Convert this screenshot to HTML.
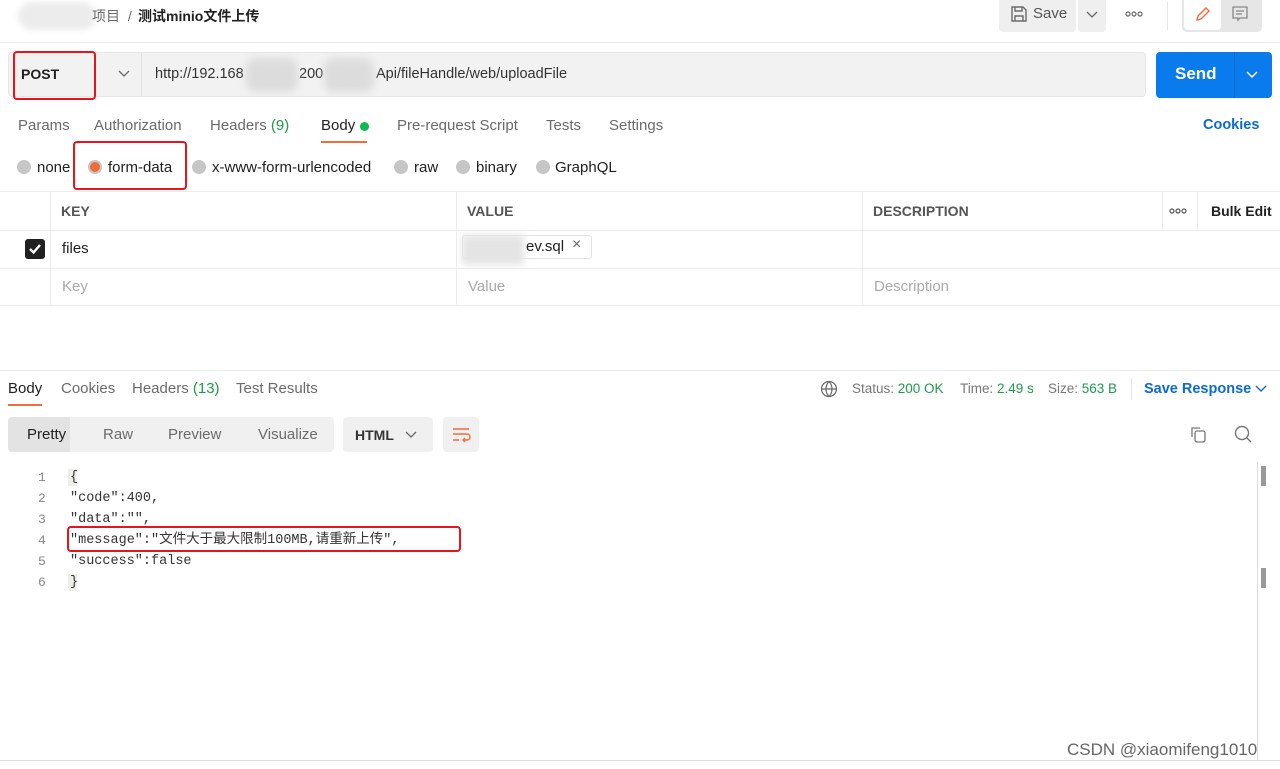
<!DOCTYPE html>
<html><head><meta charset="utf-8"><style>
*{margin:0;padding:0;box-sizing:border-box}
body{width:1280px;height:769px;overflow:hidden;background:#fff;font-family:"Liberation Sans","Noto Sans CJK SC",sans-serif;font-size:15px;color:#212121;position:relative}
.a{position:absolute;white-space:nowrap}
.g{color:#6b6b6b}
.radio{position:absolute;width:14px;height:14px;border-radius:50%;background:#c6c6c6}
.red{position:absolute;border:2.5px solid #e8141b;border-radius:4px}
.mono{font-family:"Liberation Mono","Noto Sans CJK SC",monospace;font-size:13.5px;color:#333}
.ln{color:#888;font-family:"Liberation Mono",monospace;font-size:13px}
</style></head><body>
<!-- top bar -->
<div class="a" style="left:18px;top:2px;width:78px;height:28px;background:#ececec;border-radius:14px;filter:blur(3px)"></div>
<div class="a g" style="left:92px;top:6px;font-size:14px">项目 <span style="margin-left:4px">/</span></div>
<div class="a" style="left:138px;top:6px;font-size:14px;font-weight:bold">测试minio文件上传</div>
<div class="a" style="left:999px;top:0;width:77px;height:32px;background:#efefef;border-radius:0 0 4px 4px"></div>
<svg class="a" style="left:1010px;top:5px" width="18" height="18" viewBox="0 0 18 18" fill="none" stroke="#6b6b6b" stroke-width="1.4"><path d="M2 2h11l3 3v11H2z"/><path d="M5 2v4h7V2M5 16v-5h8v5"/></svg>
<div class="a" style="left:1033px;top:5px;font-size:15px;color:#555">Save</div>
<div class="a" style="left:1078px;top:0;width:28px;height:32px;background:#efefef;border-radius:0 0 4px 4px"></div>
<svg class="a" style="left:1086px;top:10px" width="12" height="10"><path d="M1 2l5 5 5-5" stroke="#666" fill="none" stroke-width="1.3"/></svg>
<svg class="a" style="left:1125px;top:11px" width="18" height="6" fill="none" stroke="#666" stroke-width="1.2"><circle cx="3" cy="3" r="2"/><circle cx="9" cy="3" r="2"/><circle cx="15" cy="3" r="2"/></svg>
<div class="a" style="left:1167px;top:2px;width:1px;height:28px;background:#e6e6e6"></div>
<div class="a" style="left:1182px;top:0;width:80px;height:32px;background:#e6e6e6;border-radius:0 0 5px 5px"></div>
<div class="a" style="left:1184px;top:0;width:37px;height:30px;background:#fff;border-radius:0 0 4px 4px"></div>
<svg class="a" style="left:1194px;top:5px" width="18" height="18" fill="none" stroke="#f26b3a" stroke-width="1.4"><path d="M3 15l1-4 8-8 3 3-8 8z"/></svg>
<svg class="a" style="left:1231px;top:5px" width="18" height="18" fill="none" stroke="#888" stroke-width="1.3"><path d="M2 2h14v11H9l-2 2v-2H2z M5 6h8M5 9h6"/></svg>
<div class="a" style="left:0;top:42px;width:1280px;height:1px;background:#ececec"></div>
<!-- url row -->
<div class="a" style="left:8px;top:52px;width:1138px;height:45px;background:#f2f2f2;border:1px solid #e6e6e6;border-radius:4px"></div>
<div class="a" style="left:141px;top:53px;width:1px;height:43px;background:#e2e2e2"></div>
<div class="a" style="left:21px;top:66px;font-size:14px;font-weight:bold">POST</div>
<svg class="a" style="left:118px;top:70px" width="12" height="8"><path d="M1 1l5 5 5-5" stroke="#666" fill="none" stroke-width="1.3"/></svg>
<div class="a" style="left:155px;top:66px;font-size:14.5px;color:#333">http://192.168</div>
<div class="a" style="left:299px;top:66px;font-size:14.5px;color:#333">200</div>
<div class="a" style="left:376px;top:66px;font-size:14.5px;color:#333">Api/fileHandle/web/uploadFile</div>
<div class="a" style="left:246px;top:58px;width:52px;height:34px;background:#dcdcdc;filter:blur(4px);border-radius:10px"></div>
<div class="a" style="left:324px;top:58px;width:50px;height:34px;background:#dcdcdc;filter:blur(4px);border-radius:10px"></div>
<div class="red" style="left:13px;top:51px;width:83px;height:49px"></div>
<div class="a" style="left:1156px;top:52px;width:116px;height:46px;background:#097bed;border-radius:4px"></div>
<div class="a" style="left:1234px;top:52px;width:1px;height:46px;background:#0a6ad0"></div>
<div class="a" style="left:1175px;top:64px;font-size:17px;font-weight:bold;color:#fff">Send</div>
<svg class="a" style="left:1246px;top:71px" width="12" height="8"><path d="M1 1l5 5 5-5" stroke="#fff" fill="none" stroke-width="1.5"/></svg>
<!-- tabs -->
<div class="a g" style="left:18px;top:117px">Params</div>
<div class="a g" style="left:94px;top:117px">Authorization</div>
<div class="a g" style="left:210px;top:117px">Headers <span style="color:#1e9a4b">(9)</span></div>
<div class="a" style="left:321px;top:117px">Body</div>
<div class="a" style="left:360px;top:122px;width:9px;height:9px;border-radius:50%;background:#0cbb52"></div>
<div class="a" style="left:321px;top:141px;width:46px;height:2px;background:#f26b3a"></div>
<div class="a g" style="left:397px;top:117px">Pre-request Script</div>
<div class="a g" style="left:546px;top:117px">Tests</div>
<div class="a g" style="left:609px;top:117px">Settings</div>
<div class="a" style="left:1203px;top:117px;color:#0b6ad6;font-weight:bold;font-size:14.5px">Cookies</div>
<!-- radios -->
<div class="radio" style="left:17px;top:160px"></div><div class="a" style="left:37px;top:159px">none</div>
<div class="radio" style="left:88px;top:160px;background:#c6c6c6"><div style="position:absolute;left:2px;top:2px;width:10px;height:10px;border-radius:50%;background:#f26b3a"></div></div><div class="a" style="left:108px;top:159px">form-data</div>
<div class="radio" style="left:192px;top:160px"></div><div class="a" style="left:212px;top:159px">x-www-form-urlencoded</div>
<div class="radio" style="left:394px;top:160px"></div><div class="a" style="left:414px;top:159px">raw</div>
<div class="radio" style="left:456px;top:160px"></div><div class="a" style="left:476px;top:159px">binary</div>
<div class="radio" style="left:536px;top:160px"></div><div class="a" style="left:555px;top:159px">GraphQL</div>
<div class="red" style="left:73px;top:141px;width:114px;height:49px"></div>
<!-- table -->
<div class="a" style="left:0;top:191px;width:1280px;height:1px;background:#ececec"></div>
<div class="a" style="left:0;top:230px;width:1280px;height:1px;background:#ececec"></div>
<div class="a" style="left:0;top:268px;width:1280px;height:1px;background:#ececec"></div>
<div class="a" style="left:0;top:305px;width:1280px;height:1px;background:#ececec"></div>
<div class="a" style="left:50px;top:191px;width:1px;height:114px;background:#ececec"></div>
<div class="a" style="left:456px;top:191px;width:1px;height:114px;background:#ececec"></div>
<div class="a" style="left:862px;top:191px;width:1px;height:114px;background:#ececec"></div>
<div class="a" style="left:1162px;top:191px;width:1px;height:39px;background:#ececec"></div>
<div class="a" style="left:1197px;top:191px;width:1px;height:39px;background:#ececec"></div>
<div class="a" style="left:61px;top:203px;font-weight:bold;color:#555;font-size:14px">KEY</div>
<div class="a" style="left:467px;top:203px;font-weight:bold;color:#555;font-size:14px">VALUE</div>
<div class="a" style="left:873px;top:203px;font-weight:bold;color:#555;font-size:14px">DESCRIPTION</div>
<svg class="a" style="left:1169px;top:208px" width="18" height="6" fill="none" stroke="#555" stroke-width="1.2"><circle cx="3" cy="3" r="2"/><circle cx="9" cy="3" r="2"/><circle cx="15" cy="3" r="2"/></svg>
<div class="a" style="left:1211px;top:203px;font-weight:bold;font-size:14px">Bulk Edit</div>
<div class="a" style="left:25px;top:239px;width:20px;height:20px;background:#212121;border-radius:3px"></div>
<svg class="a" style="left:28px;top:242px" width="14" height="14"><path d="M2 7l3.5 3.5L12 3" stroke="#fff" stroke-width="2.4" fill="none"/></svg>
<div class="a" style="left:62px;top:240px">files</div>
<div class="a" style="left:462px;top:235px;width:130px;height:24px;border:1px solid #e2e2e2;border-radius:3px"></div>
<div class="a" style="left:462px;top:235px;width:62px;height:30px;background:#e4e4e4;filter:blur(4px)"></div>
<div class="a" style="left:526px;top:238px">ev.sql</div>
<div class="a" style="left:572px;top:236px;color:#666;font-size:16px">×</div>
<div class="a" style="left:62px;top:278px;color:#aaa">Key</div>
<div class="a" style="left:468px;top:278px;color:#aaa">Value</div>
<div class="a" style="left:874px;top:278px;color:#aaa">Description</div>
<!-- response -->
<div class="a" style="left:0;top:370px;width:1280px;height:1px;background:#ececec"></div>
<div class="a" style="left:8px;top:380px">Body</div>
<div class="a" style="left:8px;top:404px;width:34px;height:2px;background:#f26b3a"></div>
<div class="a g" style="left:61px;top:380px">Cookies</div>
<div class="a g" style="left:132px;top:380px">Headers <span style="color:#1e9a4b">(13)</span></div>
<div class="a g" style="left:236px;top:380px">Test Results</div>
<svg class="a" style="left:820px;top:380px" width="18" height="18" fill="none" stroke="#666" stroke-width="1.2"><circle cx="9" cy="9" r="7.5"/><path d="M1.5 9h15M9 1.5c-4 4-4 11 0 15M9 1.5c4 4 4 11 0 15"/></svg>
<div class="a" style="left:852px;top:381px;font-size:13.5px;color:#777">Status: <span style="color:#1e9a4b">200 OK</span></div>
<div class="a" style="left:960px;top:381px;font-size:13.5px;color:#777">Time: <span style="color:#1e9a4b">2.49 s</span></div>
<div class="a" style="left:1048px;top:381px;font-size:13.5px;color:#777">Size: <span style="color:#1e9a4b">563 B</span></div>
<div class="a" style="left:1131px;top:378px;width:1px;height:22px;background:#e6e6e6"></div>
<div class="a" style="left:1144px;top:381px;color:#0b6ad6;font-weight:bold;font-size:14.5px">Save Response</div>
<svg class="a" style="left:1255px;top:385px" width="12" height="8"><path d="M1 1l5 5 5-5" stroke="#0b6ad6" fill="none" stroke-width="1.4"/></svg>
<div class="a" style="left:8px;top:417px;width:326px;height:35px;background:#f0f0f0;border-radius:4px"></div>
<div class="a" style="left:8px;top:417px;width:62px;height:35px;background:#e3e3e3;border-radius:4px 0 0 4px"></div>
<div class="a" style="left:27px;top:426px">Pretty</div>
<div class="a g" style="left:103px;top:426px">Raw</div>
<div class="a g" style="left:168px;top:426px">Preview</div>
<div class="a g" style="left:258px;top:426px">Visualize</div>
<div class="a" style="left:343px;top:417px;width:90px;height:35px;background:#f0f0f0;border-radius:4px"></div>
<div class="a" style="left:355px;top:427px;font-weight:bold;color:#333;font-size:14px">HTML</div>
<svg class="a" style="left:405px;top:431px" width="12" height="8"><path d="M1 1l5 5 5-5" stroke="#666" fill="none" stroke-width="1.3"/></svg>
<div class="a" style="left:443px;top:417px;width:36px;height:35px;background:#f0f0f0;border-radius:4px"></div>
<svg class="a" style="left:451px;top:426px" width="20" height="18" fill="none" stroke="#f26b3a" stroke-width="1.4"><path d="M2 3h16M2 8h14a3 3 0 010 6h-4M14 12l-2 2 2 2M2 14h6"/></svg>
<svg class="a" style="left:1188px;top:425px" width="20" height="20" fill="none" stroke="#777" stroke-width="1.3"><path d="M4 12V3h8"/><rect x="7" y="6" width="10" height="11" rx="2"/></svg>
<svg class="a" style="left:1233px;top:424px" width="20" height="20" fill="none" stroke="#777" stroke-width="1.4"><circle cx="9" cy="9" r="6.5"/><path d="M14 14l4 4"/></svg>
<!-- code -->
<div class="a ln" style="left:38px;top:467px;line-height:21px;text-align:right">1<br>2<br>3<br>4<br>5<br>6</div>
<div class="a mono" style="left:70px;top:467px;line-height:21px">{<br>"code":400,<br>"data":"",<br>"message":"文件大于最大限制100MB,请重新上传",<br>"success":false<br>}</div>
<div class="a" style="left:68px;top:469px;width:9px;height:17px;background:#eef0e8;z-index:-1"></div>
<div class="a" style="left:68px;top:574px;width:9px;height:17px;background:#eef0e8;z-index:-1"></div>
<div class="red" style="left:67px;top:526px;width:394px;height:26px"></div>
<div class="a" style="left:1257px;top:462px;width:1px;height:298px;background:#ddd"></div>
<div class="a" style="left:1261px;top:466px;width:5px;height:20px;background:#999"></div>
<div class="a" style="left:1261px;top:568px;width:5px;height:20px;background:#999"></div>
<div class="a" style="left:1067px;top:740px;font-size:17px;color:#666">CSDN @xiaomifeng1010</div>
<div class="a" style="left:0;top:760px;width:1280px;height:1px;background:#ddd"></div>
</body></html>
